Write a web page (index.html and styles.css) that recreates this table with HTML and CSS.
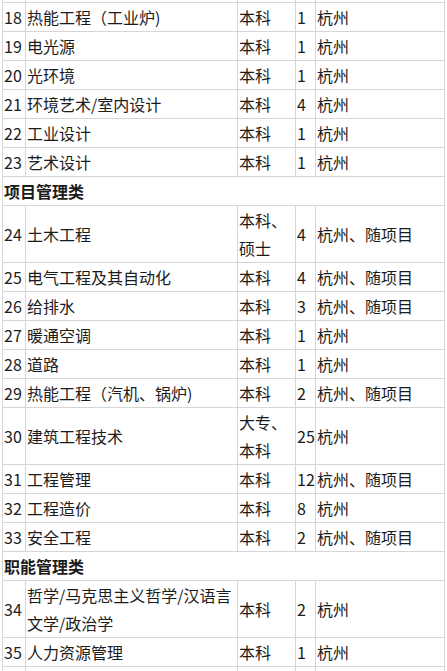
FILE: index.html
```html
<!DOCTYPE html>
<html lang="zh-CN">
<head>
<meta charset="utf-8">
<title>招聘岗位</title>
<link rel="stylesheet" href="styles.css">
</head>
<body>
<div class="sheet">
<table class="grid">
<colgroup>
<col class="c-no"><col class="c-major"><col class="c-deg"><col class="c-num"><col class="c-loc">
</colgroup>
<tbody>
<tr class="stub"><td></td><td></td><td></td><td></td><td></td></tr>
<tr><td>18</td><td>热能工程（工业炉)</td><td>本科</td><td>1</td><td>杭州</td></tr>
<tr><td>19</td><td>电光源</td><td>本科</td><td>1</td><td>杭州</td></tr>
<tr><td>20</td><td>光环境</td><td>本科</td><td>1</td><td>杭州</td></tr>
<tr><td>21</td><td>环境艺术/室内设计</td><td>本科</td><td>4</td><td>杭州</td></tr>
<tr><td>22</td><td>工业设计</td><td>本科</td><td>1</td><td>杭州</td></tr>
<tr><td>23</td><td>艺术设计</td><td>本科</td><td>1</td><td>杭州</td></tr>
<tr class="group"><td colspan="5">项目管理类</td></tr>
<tr><td>24</td><td>土木工程</td><td>本科、<br>硕士</td><td>4</td><td>杭州、随项目</td></tr>
<tr><td>25</td><td>电气工程及其自动化</td><td>本科</td><td>4</td><td>杭州、随项目</td></tr>
<tr><td>26</td><td>给排水</td><td>本科</td><td>3</td><td>杭州、随项目</td></tr>
<tr><td>27</td><td>暖通空调</td><td>本科</td><td>1</td><td>杭州</td></tr>
<tr><td>28</td><td>道路</td><td>本科</td><td>1</td><td>杭州</td></tr>
<tr><td>29</td><td>热能工程（汽机、锅炉)</td><td>本科</td><td>2</td><td>杭州、随项目</td></tr>
<tr><td>30</td><td>建筑工程技术</td><td>大专、<br>本科</td><td>25</td><td>杭州</td></tr>
<tr><td>31</td><td>工程管理</td><td>本科</td><td>12</td><td>杭州、随项目</td></tr>
<tr><td>32</td><td>工程造价</td><td>本科</td><td>8</td><td>杭州</td></tr>
<tr><td>33</td><td>安全工程</td><td>本科</td><td>2</td><td>杭州、随项目</td></tr>
<tr class="group"><td colspan="5">职能管理类</td></tr>
<tr><td>34</td><td>哲学/马克思主义哲学/汉语言<br>文学/政治学</td><td>本科</td><td>2</td><td>杭州</td></tr>
<tr><td>35</td><td>人力资源管理</td><td>本科</td><td>1</td><td>杭州</td></tr>
<tr class="stub"><td></td><td></td><td></td><td></td><td></td></tr>
</tbody>
</table>
</div>
</body>
</html>
```

FILE: styles.css
```css
html, body {
  margin: 0;
  padding: 0;
  background: #ffffff;
}

body {
  width: 447px;
  height: 671px;
  overflow: hidden;
}

.sheet {
  padding-left: 2px;
  overflow: hidden;
}

.grid {
  margin-top: -27px;
  border-collapse: collapse;
  table-layout: fixed;
  width: 442px;
  font-family: "Microsoft YaHei", "Noto Sans CJK SC", "Noto Sans", sans-serif;
  font-size: 16px;
  color: #1c1c1c;
}

.c-no { width: 23px; }
.c-major { width: 212px; }
.c-deg { width: 58px; }
.c-num { width: 20px; }
.c-loc { width: 129px; }

.grid td {
  border: 1px solid #d6d6d6;
  padding: 0 0 0 1px;
  height: 28px;
  line-height: 28px;
  vertical-align: middle;
  white-space: nowrap;
  overflow: visible;
}

.grid .group td {
  font-weight: bold;
}
```
